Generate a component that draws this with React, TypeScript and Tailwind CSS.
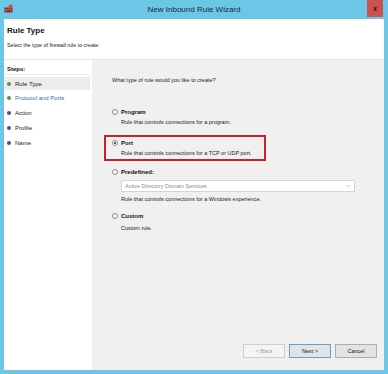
import { ReactNode } from 'react';

const font = { fontFamily: '"Liberation Sans", Arial, sans-serif' };

interface StepProps {
    label: string;
    done?: boolean;
    active?: boolean;
}

function Step({ label, done, active }: StepProps) {
    return (
        <div className="flex items-center h-[15px] pl-[3px]">
            <span
                className={`w-[4px] h-[4px] rounded-full mr-[4px] ${
                    done ? 'bg-[#4e9a3c]' : 'bg-[#4a4f9c]'
                }`}
            />
            <span
                className={`text-[6px] leading-none ${
                    active ? 'text-[#2e6bb5]' : 'text-[#222]'
                }`}>
                {label}
            </span>
        </div>
    );
}

interface OptionProps {
    title: string;
    checked?: boolean;
    children?: ReactNode;
}

function Option({ title, checked, children }: OptionProps) {
    return (
        <div className="flex flex-col">
            <div className="flex items-center h-[10px]">
                <span className="w-[6px] h-[6px] rounded-full border border-[#8a8a8a] bg-white flex items-center justify-center ml-[9px] mr-[3px]">
                    {checked && (
                        <span className="w-[2px] h-[2px] rounded-full bg-[#222]" />
                    )}
                </span>
                <span className="text-[6px] font-bold leading-none text-[#111]">
                    {title}
                </span>
            </div>
            <div className="pl-[18px]">{children}</div>
        </div>
    );
}

function Desc({ children, gap }: { children: ReactNode; gap?: boolean }) {
    return (
        <p
            className={`text-[5.5px] leading-[10px] text-[#222] ${
                gap ? 'mt-[2px]' : ''
            }`}>
            {children}
        </p>
    );
}

interface ButtonProps {
    label: string;
    disabled?: boolean;
    primary?: boolean;
}

function Button({ label, disabled, primary }: ButtonProps) {
    return (
        <div
            className={`w-[42px] h-[14px] flex items-center justify-center text-[5.5px] border ${
                disabled
                    ? 'bg-[#f4f4f4] border-[#cfcfcf] text-[#a0a0a0]'
                    : primary
                      ? 'bg-[#e3e3e3] border-[#5fa0d8] text-[#111]'
                      : 'bg-[#e3e3e3] border-[#adadad] text-[#111]'
            }`}>
            {label}
        </div>
    );
}

export default function App() {
    return (
        <div
            className="w-[388px] h-[374px] bg-[#6cc6e5] flex flex-col"
            style={font}>
            <div className="h-[19px] flex items-center relative">
                <svg
                    width="9"
                    height="9"
                    viewBox="0 0 9 9"
                    className="ml-[4px] mb-[2px]">
                    <rect x="0.5" y="3.5" width="8" height="5" fill="#8b2a2a" />
                    <path d="M0.5 5.5h8M4.5 3.5v2M2.5 5.5v3M6.5 5.5v3" stroke="#c8766a" strokeWidth="0.6" />
                    <circle cx="6.5" cy="2.5" r="2" fill="#d04a3a" />
                </svg>
                <span className="absolute left-0 right-0 text-center text-[8px] text-[#1a2a3a] pointer-events-none">
                    New Inbound Rule Wizard
                </span>
                <div className="ml-auto mr-[5px] self-start w-[16px] h-[17px] bg-[#c9534f] flex items-center justify-center">
                    <span className="text-[7px] font-bold text-[#3a1010] leading-none">
                        x
                    </span>
                </div>
            </div>

            <div className="flex-1 mx-[4px] mb-[4px] flex flex-col bg-[#f0f0f0]">
                <div className="h-[41px] bg-white border-b border-[#e6e6e6] pl-[3px] pt-[7px]">
                    <p className="text-[8px] font-bold leading-[9px] text-[#111]">
                        Rule Type
                    </p>
                    <p className="text-[5.3px] leading-[8px] mt-[6px] text-[#222]">
                        Select the type of firewall rule to create.
                    </p>
                </div>

                <div className="flex-1 flex">
                    <div className="w-[88px] bg-white flex flex-col pt-[3px]">
                        <div className="h-[12px] flex items-center pl-[3px] border-b border-[#ececec] mr-[2px]">
                            <span className="text-[6px] font-bold leading-none text-[#111]">
                                Steps:
                            </span>
                        </div>
                        <div className="mt-[2px] flex flex-col mr-[2px]">
                            <div className="h-[13px] flex items-center pl-[3px] bg-[#ececec]">
                                <span className="w-[4px] h-[4px] rounded-full mr-[4px] bg-[#4e9a3c]" />
                                <span className="text-[6px] leading-none text-[#222]">
                                    Rule Type
                                </span>
                            </div>
                            <Step label="Protocol and Ports" done active />
                            <Step label="Action" />
                            <Step label="Profile" />
                            <Step label="Name" />
                        </div>
                    </div>

                    <div className="flex-1 flex flex-col pl-[11px] pt-[15px] pr-[6px] pb-[12px]">
                        <p className="text-[5.5px] leading-[10px] text-[#222] pl-[9px]">
                            What type of rule would you like to create?
                        </p>

                        <div className="mt-[22px]">
                            <Option title="Program">
                                <Desc>Rule that controls connections for a program.</Desc>
                            </Option>
                        </div>

                        <div className="mt-[8px] w-[162px] h-[26px] border-2 border-[#cc2129] pt-[1px] ml-[1px]">
                            <div className="-ml-[3px]">
                                <Option title="Port" checked>
                                    <Desc>Rule that controls connections for a TCP or UDP port.</Desc>
                                </Option>
                            </div>
                        </div>

                        <div className="mt-[6px]">
                            <Option title="Predefined:">
                                <div className="mt-[3px] h-[12px] w-[234px] bg-white border border-[#d4d4d4] flex items-center justify-between px-[3px]">
                                    <span className="text-[5.5px] text-[#8a8a8a]">
                                        Active Directory Domain Services
                                    </span>
                                    <svg width="5" height="4" viewBox="0 0 5 4">
                                        <path d="M0.5 1l2 2 2-2" stroke="#9a9a9a" strokeWidth="0.6" fill="none" />
                                    </svg>
                                </div>
                                <Desc gap>Rule that controls connections for a Windows experience.</Desc>
                            </Option>
                        </div>

                        <div className="mt-[7px]">
                            <Option title="Custom">
                                <Desc gap>Custom rule.</Desc>
                            </Option>
                        </div>

                        <div className="mt-auto flex justify-end gap-[4px] pr-[1px]">
                            <Button label="< Back" disabled />
                            <Button label="Next >" primary />
                            <Button label="Cancel" />
                        </div>
                    </div>
                </div>
            </div>
        </div>
    );
}
